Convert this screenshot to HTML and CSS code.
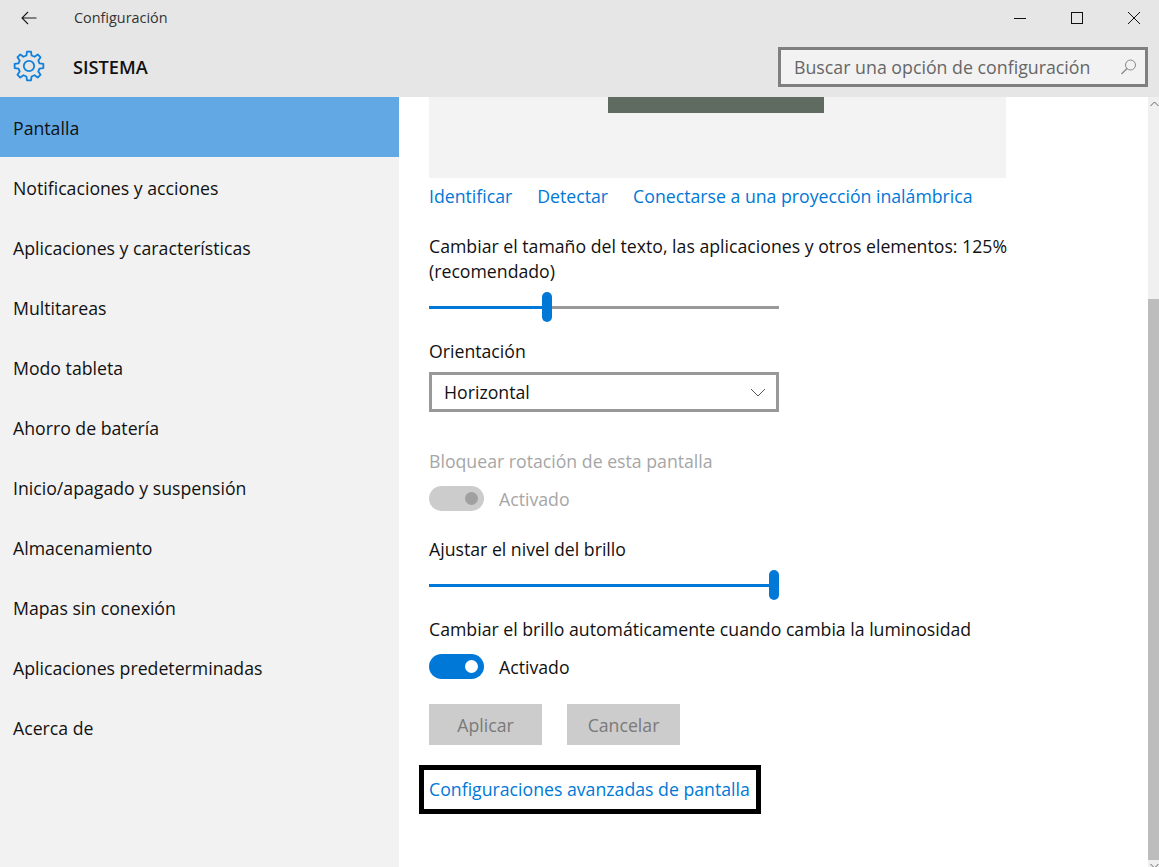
FILE: index.html
```html
<!DOCTYPE html>
<html lang="es">
<head>
<meta charset="utf-8">
<title>Configuración</title>
<link rel="stylesheet" href="styles.css">
</head>
<body>
<div class="app">
  <header class="header">
    <div class="titlebar">
      <svg class="back" width="16" height="14" viewBox="0 0 16 14"><path d="M15.5 7H1M7 1L1 7l6 6" fill="none" stroke="#1a1a1a" stroke-width="1.1"/></svg>
      <span class="title">Configuración</span>
      <div class="winctl">
        <svg width="14" height="14" viewBox="0 0 14 14"><path d="M1 7.5h12" stroke="#111" stroke-width="1" fill="none"/></svg>
        <svg width="14" height="14" viewBox="0 0 14 14"><rect x="1.5" y="1.5" width="11" height="11" stroke="#111" stroke-width="1" fill="none"/></svg>
        <svg width="14" height="14" viewBox="0 0 14 14"><path d="M1 1l12 12M13 1L1 13" stroke="#111" stroke-width="1" fill="none"/></svg>
      </div>
    </div>
    <div class="headrow">
      <svg class="gear" width="32" height="32" viewBox="-16 -16 32 32"><path d="M-2.61-10.48L-2.02-14.36H2.02L2.61-10.48L5.56-9.26L8.73-11.58L11.58-8.73L9.26-5.56L10.48-2.61L14.36-2.02V2.02L10.48 2.61L9.26 5.56L11.58 8.73L8.73 11.58L5.56 9.26L2.61 10.48L2.02 14.36H-2.02L-2.61 10.48L-5.56 9.26L-8.73 11.58L-11.58 8.73L-9.26 5.56L-10.48 2.61L-14.36 2.02V-2.02L-10.48-2.61L-9.26-5.56L-11.58-8.73L-8.73-11.58L-5.56-9.26Z" fill="none" stroke="#0f7fdc" stroke-width="1.800" stroke-linejoin="round"/><circle cx="0" cy="0" r="5.200" fill="none" stroke="#0f7fdc" stroke-width="1.800"/></svg>
      <span class="section">SISTEMA</span>
      <div class="search">
        <span class="search-text">Buscar una opción de configuración</span>
        <svg width="18" height="18" viewBox="0 0 18 18"><circle cx="10.500" cy="7" r="5" fill="none" stroke="#888" stroke-width="1"/><path d="M7 10.500L1.500 16" stroke="#888" stroke-width="1.200" fill="none"/></svg>
      </div>
    </div>
  </header>
  <div class="body">
    <nav class="sidebar">
      <a class="item active">Pantalla</a>
      <a class="item">Notificaciones y acciones</a>
      <a class="item">Aplicaciones y características</a>
      <a class="item">Multitareas</a>
      <a class="item">Modo tableta</a>
      <a class="item">Ahorro de batería</a>
      <a class="item">Inicio/apagado y suspensión</a>
      <a class="item">Almacenamiento</a>
      <a class="item">Mapas sin conexión</a>
      <a class="item">Aplicaciones predeterminadas</a>
      <a class="item">Acerca de</a>
    </nav>
    <main class="content">
      <div class="preview"><div class="monitor"></div></div>
      <div class="links">
        <a class="link">Identificar</a>
        <a class="link">Detectar</a>
        <a class="link">Conectarse a una proyección inalámbrica</a>
      </div>
      <p class="label scale-label">Cambiar el tamaño del texto, las aplicaciones y otros elementos: 125% (recomendado)</p>
      <div class="slider slider-scale">
        <div class="fill fill-scale"></div>
        <div class="thumb"></div>
        <div class="rest"></div>
      </div>
      <p class="label orient-label">Orientación</p>
      <div class="select">
        <span>Horizontal</span>
        <svg width="16" height="9" viewBox="0 0 16 9"><path d="M1 1l7 7 7-7" fill="none" stroke="#555" stroke-width="1"/></svg>
      </div>
      <p class="label disabled lock-label">Bloquear rotación de esta pantalla</p>
      <div class="toggle-row disabled">
        <div class="toggle toggle-off"><div class="knob"></div></div>
        <span>Activado</span>
      </div>
      <p class="label bright-label">Ajustar el nivel del brillo</p>
      <div class="slider slider-bright">
        <div class="fill fill-bright"></div>
        <div class="thumb"></div>
      </div>
      <p class="label auto-label">Cambiar el brillo automáticamente cuando cambia la luminosidad</p>
      <div class="toggle-row">
        <div class="toggle toggle-on"><div class="knob"></div></div>
        <span>Activado</span>
      </div>
      <div class="buttons">
        <div class="btn">Aplicar</div>
        <div class="btn">Cancelar</div>
      </div>
      <div class="advanced"><a class="link">Configuraciones avanzadas de pantalla</a></div>
    </main>
    <aside class="scrollbar">
      <svg class="up" width="9" height="6" viewBox="0 0 9 6"><path d="M.5 5l4-4 4 4" fill="none" stroke="#666" stroke-width="1"/></svg>
      <div class="track-space"></div>
      <div class="sb-thumb"></div>
      <svg class="down" width="9" height="7" viewBox="0 0 9 7"><path d="M.5 4l4 4 4-4" fill="none" stroke="#666" stroke-width="1"/></svg>
    </aside>
  </div>
</div>
</body>
</html>
```
FILE: styles.css
```css
* { box-sizing: border-box; }
html, body { margin: 0; height: 100%; overflow: hidden; }
body { font-family: "Open Sans", "Noto Sans", sans-serif; font-size: 17.7px; color: #111; background: #fff; }
.app { width: 1159px; height: 867px; display: flex; flex-direction: column; }

.header { height: 97px; background: #e6e6e6; flex: none; }
.titlebar { height: 35px; display: flex; align-items: center; padding-left: 21px; }
.back { flex: none; }
.title { margin-left: 37px; font-size: 14.400px; color: #333; }
.winctl { margin-left: auto; display: flex; gap: 43px; padding-right: 18px; }
.headrow { height: 62px; display: flex; align-items: center; padding-left: 13px; padding-right: 11px; }
.gear { flex: none; }
.section { margin-left: 28px; margin-top: 2px; font-size: 18.200px; font-weight: 600; color: #111; }
.search { margin-left: auto; margin-top: 2px; width: 370px; height: 40px; border: 3px solid #7f7f7f; background: #f2f2f2; display: flex; align-items: center; justify-content: space-between; padding: 0 7px 0 13px; }
.search-text { color: #666; font-size: 17.770px; }

.body { flex: 1; display: flex; min-height: 0; }
.sidebar { width: 399px; flex: none; background: #f2f2f2; }
.item { display: flex; align-items: center; height: 60px; padding-left: 13px; padding-top: 2px; font-size: 17.7px; color: #111; }
.item.active { background: #62a8e5; }

.content { width: 749px; flex: none; padding-left: 30px; background: #fff; }
.preview { width: 577px; height: 81px; background: #f3f3f3; display: flex; justify-content: center; }
.monitor { width: 216px; height: 16px; background: #5f6b60; margin-right: 3px; }
.links { display: flex; gap: 25px; margin-top: 5px; height: 25px; align-items: center; }
.link { color: #0078d7; font-size: 17.7px; }
.label { margin: 0; font-size: 17.7px; line-height: 25px; color: #111; }
.scale-label { margin-top: 26px; width: 590px; }
.slider { width: 350px; height: 30px; display: flex; align-items: center; }
.slider-scale { margin-top: 8px; }
.fill { height: 3px; background: #0078d7; }
.fill-scale { width: 113px; }
.thumb { width: 10px; height: 30px; border-radius: 5px; background: #0078d7; flex: none; }
.rest { flex: 1; height: 3px; background: #999; }
.orient-label { margin-top: 17px; }
.select { margin-top: 8px; width: 350px; height: 40px; border: 3px solid #999; display: flex; align-items: center; justify-content: space-between; padding: 0 10px 0 12px; font-size: 17.7px; color: #111; }
.lock-label { margin-top: 37px; }
.disabled, .label.disabled { color: #a6a6a6; }
.toggle-row { display: flex; align-items: center; gap: 15px; height: 25px; margin-top: 12px; font-size: 17.7px; }
.toggle { width: 55px; height: 25px; border-radius: 13px; display: flex; align-items: center; justify-content: flex-end; padding-right: 6px; }
.knob { width: 13px; height: 13px; border-radius: 50%; }
.toggle-off { background: #cccccc; }
.toggle-off .knob { background: #a0a0a0; }
.toggle-on { background: #0078d7; }
.toggle-on .knob { background: #fff; }
.bright-label { margin-top: 26px; }
.slider-bright { margin-top: 8px; }
.fill-bright { width: 340px; }
.auto-label { margin-top: 17px; }
.buttons { display: flex; gap: 25px; margin-top: 25px; }
.btn { width: 113px; height: 41px; background: #cccccc; color: #7a7a7a; font-size: 17.7px; display: flex; align-items: center; justify-content: center; }
.advanced { margin-top: 20px; margin-left: -10px; width: 342px; height: 49px; border: 5px solid #000; display: flex; align-items: center; padding-left: 5px; padding-bottom: 2px; }

.scrollbar { width: 11px; flex: 1; background: #f0f0f0; display: flex; flex-direction: column; align-items: flex-end; }
.up { margin-top: 4px; flex: none; }
.track-space { height: 192px; flex: none; }
.sb-thumb { width: 100%; height: 561px; background: #bdbdbd; flex: none; }
.down { flex: none; }
```
